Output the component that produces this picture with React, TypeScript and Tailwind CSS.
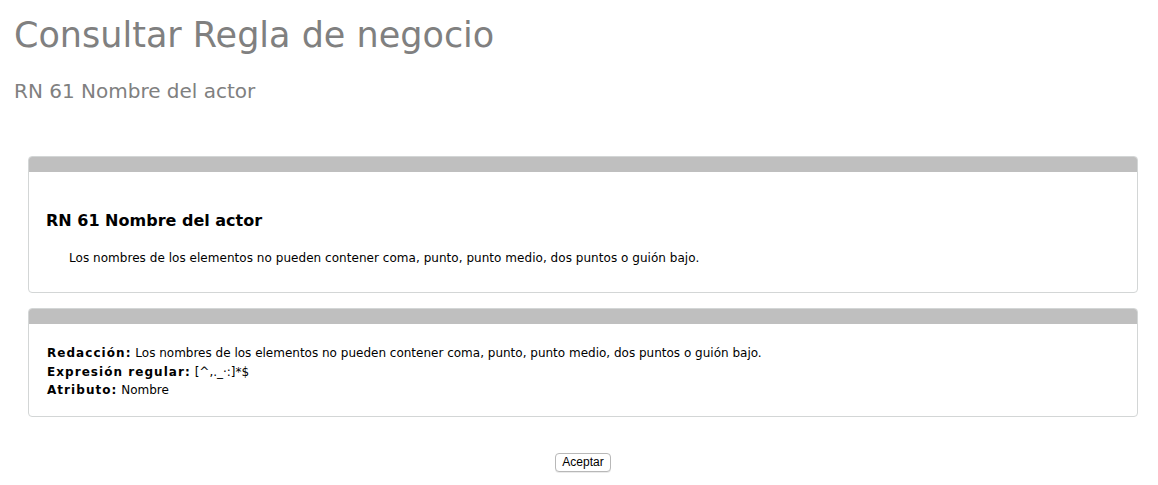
const font = { fontFamily: '"DejaVu Sans", Verdana, sans-serif' };

const Panel = ({ children }: { children: React.ReactNode }) => (
  <div className="rounded-[4px] border border-[#d3d6d6] bg-white overflow-hidden">
    <div className="h-[15px] bg-[#bfbfbf]" />
    {children}
  </div>
);

export default function App() {
  return (
    <div className="min-h-screen bg-white text-black" style={font}>
      <div className="px-[14px] pt-[13px]">
        <h1 className="text-[35px] leading-[44px] text-[#808080]">Consultar Regla de negocio</h1>
        <h2 className="mt-[22px] text-[20px] leading-[24px] text-[#808080]">RN 61 Nombre del actor</h2>
      </div>

      <div className="ml-[28px] mr-[20px] mt-[53px]">
        <div className="flex flex-col gap-[15px]">
          <Panel>
            <div className="px-[17px] pt-[39px] pb-[26px]">
              <h3 className="text-[16px] font-bold leading-[20px]">RN 61 Nombre del actor</h3>
              <p className="mt-[19px] pl-[23px] text-[12px] leading-[16px] tracking-[0.04px]">
                Los nombres de los elementos no pueden contener coma, punto, punto medio, dos puntos o guión bajo.
              </p>
            </div>
          </Panel>

          <Panel>
            <div className="px-[18px] pt-[20px] pb-[16px] text-[12px] leading-[18.5px]">
              <div>
                <span className="font-bold tracking-[1.05px]">Redacción:</span> Los nombres de los elementos no
                pueden contener coma, punto, punto medio, dos puntos o guión bajo.
              </div>
              <div>
                <span className="font-bold tracking-[1.05px]">Expresión regular:</span> [^,._·:]*$
              </div>
              <div>
                <span className="font-bold tracking-[1.05px]">Atributo:</span> Nombre
              </div>
            </div>
          </Panel>
        </div>

        <div className="mt-[36px] flex justify-center">
          <button
            className="h-[19px] rounded-[4px] border border-[#b8b8b8] bg-white px-[6px] text-[12px] leading-[17px] text-black shadow-[0_1px_0_rgba(0,0,0,0.08)]"
            style={{ fontFamily: '"Liberation Sans", Arial, sans-serif' }}
          >
            Aceptar
          </button>
        </div>
      </div>
    </div>
  );
}
